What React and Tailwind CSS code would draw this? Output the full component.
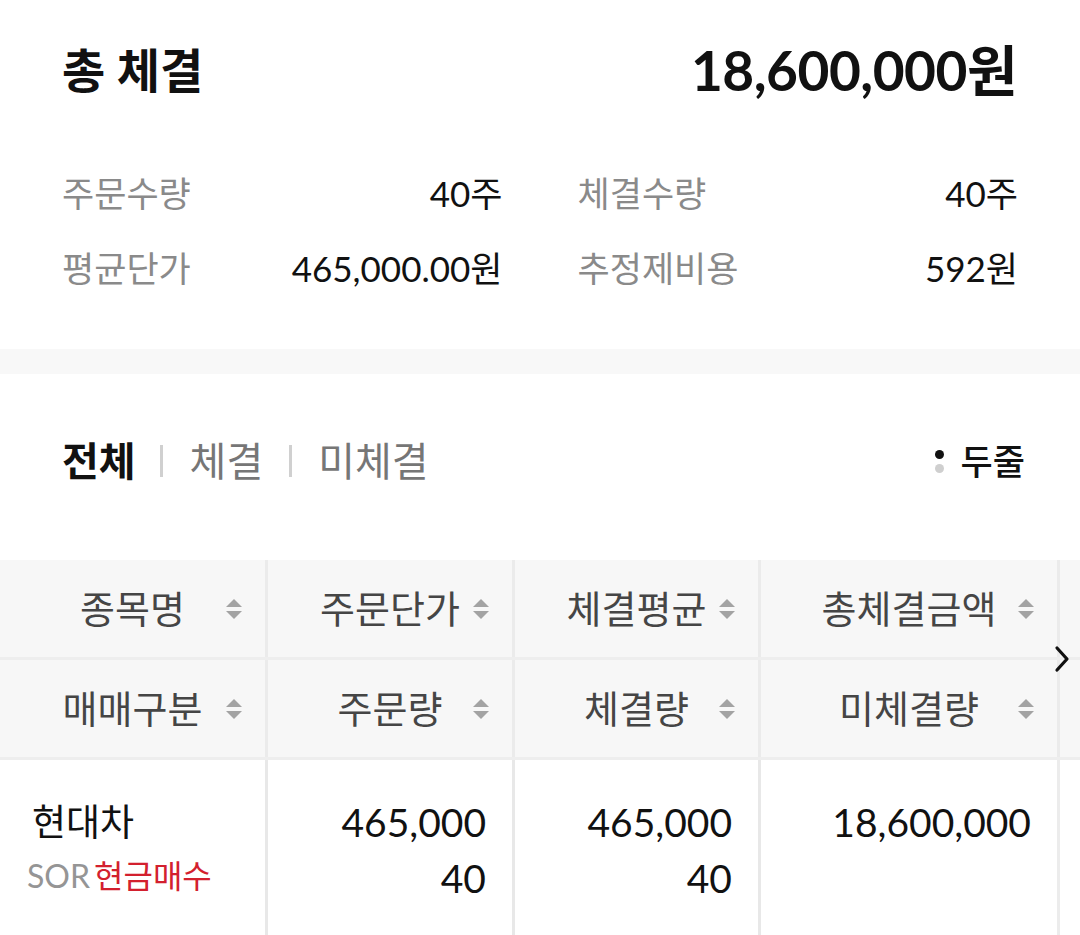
import React from "react";

function SortIcon() {
  return (
    <svg width="16" height="28" viewBox="0 0 16 28" className="absolute right-[23px] top-1/2 -translate-y-1/2">
      <path d="M8 4 L16 12 L0 12 Z" fill="#a3a3a3" />
      <path d="M0 16 L16 16 L8 24 Z" fill="#a3a3a3" />
    </svg>
  );
}

function HeadCell({ label, w }) {
  return (
    <div className={`relative flex items-center justify-center h-full ${w} border-r-[3px] border-[#ebebeb]`}>
      <span>{label}</span>
      <SortIcon />
    </div>
  );
}

export default function App() {
  return (
    <div className="w-[1080px] h-[935px] bg-white overflow-hidden text-[#111] font-['Lato','Noto_Sans_CJK_KR',sans-serif]">
      <section className="px-[62px] pt-[40px]">
        <div className="flex items-center justify-between h-[60px]">
          <h1 className="text-[47px] font-bold leading-none">총 체결</h1>
          <div className="text-[55px] font-bold leading-none tracking-[-0.5px] pr-[1px]">18,600,000원</div>
        </div>
        <div className="mt-[56px] grid grid-cols-2 gap-x-[75px] text-[35px]">
          <div className="flex items-center justify-between h-[75px]">
            <span className="text-[#8a8a8a]">주문수량</span>
            <span>40주</span>
          </div>
          <div className="flex items-center justify-between h-[75px]">
            <span className="text-[#8a8a8a]">체결수량</span>
            <span>40주</span>
          </div>
          <div className="flex items-center justify-between h-[75px]">
            <span className="text-[#8a8a8a]">평균단가</span>
            <span>465,000.00원</span>
          </div>
          <div className="flex items-center justify-between h-[75px]">
            <span className="text-[#8a8a8a]">추정제비용</span>
            <span>592원</span>
          </div>
        </div>
      </section>

      <div className="mt-[43px] h-[25px] bg-[#f8f8f8]" />

      <div className="mt-[57px] h-[60px] px-[62px] flex items-center justify-between">
        <div className="flex items-center text-[40px]">
          <span className="font-bold text-[#111]">전체</span>
          <span className="ml-[24px] mr-[27px] w-[3px] h-[32px] bg-[#d0d0d0]" />
          <span className="text-[#767676]">체결</span>
          <span className="ml-[26px] mr-[26px] w-[3px] h-[32px] bg-[#d0d0d0]" />
          <span className="text-[#767676]">미체결</span>
        </div>
        <div className="flex items-center gap-[17px] mr-[-7px]">
          <span className="flex flex-col gap-[5px]">
            <span className="w-[9px] h-[9px] rounded-full bg-[#111]" />
            <span className="w-[9px] h-[9px] rounded-full bg-[#cfcfcf]" />
          </span>
          <span className="text-[35px] font-medium">두줄</span>
        </div>
      </div>

      <div className="relative mt-[69px]">
        <div className="bg-[#f7f7f7] text-[38px] text-[#454545]">
          <div className="flex h-[97px]">
            <HeadCell label="종목명" w="w-[268px]" />
            <HeadCell label="주문단가" w="w-[247px]" />
            <HeadCell label="체결평균" w="w-[246px]" />
            <HeadCell label="총체결금액" w="w-[299px]" />
            <div className="flex-1" />
          </div>
          <div className="h-[3px] bg-[#eeeeee]" />
          <div className="flex h-[97px]">
            <HeadCell label="매매구분" w="w-[268px]" />
            <HeadCell label="주문량" w="w-[247px]" />
            <HeadCell label="체결량" w="w-[246px]" />
            <HeadCell label="미체결량" w="w-[299px]" />
            <div className="flex-1" />
          </div>
          <div className="h-[3px] bg-[#eeeeee]" />
        </div>

        <div className="flex h-[200px] bg-white">
          <div className="w-[268px] border-r-[3px] border-[#e8e8e8] pl-[32px] pt-[34px]">
            <div className="text-[37px] leading-[56px]">현대차</div>
            <div className="text-[32px] leading-[52px] -ml-[5px]">
              <span className="text-[#959595]">SOR</span>
              <span className="ml-[4px] text-[#d3202e]">현금매수</span>
            </div>
          </div>
          <div className="w-[247px] border-r-[3px] border-[#e8e8e8] pr-[26px] pt-[34px] text-right text-[39px] leading-[56px]">
            <div>465,000</div>
            <div>40</div>
          </div>
          <div className="w-[246px] border-r-[3px] border-[#e8e8e8] pr-[26px] pt-[34px] text-right text-[39px] leading-[56px]">
            <div>465,000</div>
            <div>40</div>
          </div>
          <div className="w-[299px] border-r-[3px] border-[#ececec] pr-[26px] pt-[34px] text-right text-[39px] leading-[56px]">
            <div>18,600,000</div>
          </div>
          <div className="flex-1" />
        </div>

        <svg width="18" height="28" viewBox="0 0 18 28" className="absolute left-[1053px] top-[85px]">
          <path d="M4 3 L14 14 L4 25" fill="none" stroke="#111" strokeWidth="3.2" strokeLinecap="round" strokeLinejoin="round" />
        </svg>
      </div>
    </div>
  );
}
